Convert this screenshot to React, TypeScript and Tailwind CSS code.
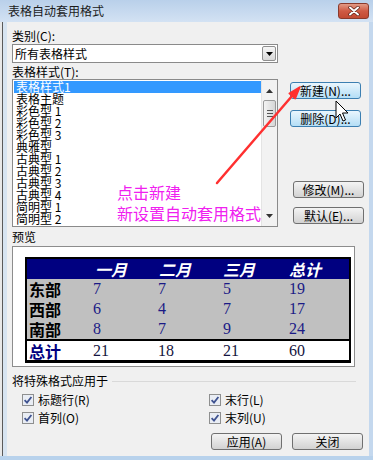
import React from 'react'

const items = [
  '表格样式1', '表格主题', '彩色型 1', '彩色型 2', '彩色型 3', '典雅型',
  '古典型 1', '古典型 2', '古典型 3', '古典型 4', '简明型 1', '简明型 2',
]

const regions = [
  { name: '东部', v: [7, 7, 5, 19] },
  { name: '西部', v: [6, 4, 7, 17] },
  { name: '南部', v: [8, 7, 9, 24] },
]

const cols = 'grid grid-cols-[66px_65px_65px_66px_1fr]'

function Btn({ label, hot, className = '' }: { label: string; hot?: boolean; className?: string }) {
  return (
    <div
      className={`h-[17px] w-[71px] rounded-[3px] border flex items-center justify-center text-[12px] leading-none text-black bg-linear-to-b ${
        hot ? 'border-[#3c7fb1] from-[#eaf6fd] to-[#b4def6]' : 'border-[#707070] from-[#f4f4f4] to-[#d2d2d2]'
      } ${className}`}
    >
      {label}
    </div>
  )
}

function Check({ label }: { label: string }) {
  return (
    <div className="flex items-center gap-[4px]">
      <svg width="12" height="12" viewBox="0 0 12 12">
        <rect x="0.5" y="0.5" width="11" height="11" fill="#e9edf4" stroke="#8e8f8f" />
        <path d="M2.6 6.2 L5 8.6 L9.4 3" stroke="#3e5290" strokeWidth="1.8" fill="none" />
      </svg>
      <span className="text-[12px] leading-none">{label}</span>
    </div>
  )
}

export default function App() {
  return (
    <div className="relative w-[373px] h-[460px] overflow-hidden flex flex-col bg-[#c4d8ee] font-['Noto_Sans_CJK_SC',sans-serif] text-black">
      {/* title bar */}
      <div className="h-[22px] flex items-start justify-between pl-[8px] pr-[4px] pt-[3px] bg-linear-to-b from-[#b9d0ea] to-[#d3e2f3]">
        <span className="text-[12px] leading-[16px] text-[#1b1b1b]">表格自动套用格式</span>
        <div className="w-[31px] h-[16px] rounded-[3px] border border-[#8a3a2c] bg-linear-to-b from-[#e29a86] via-[#cf5a44] to-[#c24a33] flex items-center justify-center">
          <svg width="12" height="10" viewBox="0 0 12 10">
            <path d="M2 1.5 L10 8.5 M10 1.5 L2 8.5" stroke="#5a1f17" strokeWidth="3.4" strokeLinecap="round" />
            <path d="M2 1.5 L10 8.5 M10 1.5 L2 8.5" stroke="#ffffff" strokeWidth="2" strokeLinecap="round" />
          </svg>
        </div>
      </div>

      <div className="flex flex-1">
        {/* left edge */}
        <div className="w-[7px] flex">
          <div className="w-[2px] bg-[#e8e8e8]" />
          <div className="w-[1px] bg-[#5a5a5a]" />
          <div className="flex-1 bg-[#d7e4f1]" />
        </div>

        {/* dialog body */}
        <div className="flex-1 bg-[#f0f0f0] flex flex-col pl-[5px]">
          <div className="mt-[8px] text-[12px] leading-[12px]">类别(C):</div>
          <div className="mt-[2px] w-[266px] h-[19px] bg-white border border-[#8a8a8a] flex items-center justify-between pl-[2px] pr-[1px]">
            <span className="text-[12px] leading-none">所有表格样式</span>
            <div className="w-[14px] h-[15px] border border-[#8f8f8f] rounded-[2px] bg-linear-to-b from-[#f6f6f6] to-[#d8d8d8] flex items-center justify-center">
              <svg width="7" height="4" viewBox="0 0 7 4">
                <path d="M0 0 L7 0 L3.5 4 Z" fill="#000" />
              </svg>
            </div>
          </div>
          <div className="mt-[3px] text-[12px] leading-[12px]">表格样式(T):</div>

          <div className="mt-[1px] flex items-start gap-[12px]">
            {/* list box */}
            <div className="w-[266px] h-[148px] bg-white border border-[#8a8a8a] flex">
              <div className="flex-1 pt-[1px] pl-[1px]">
                {items.map((it, i) => (
                  <div
                    key={it}
                    className={`h-[12px] text-[12px] leading-[12px] pl-[2px] ${i === 0 ? 'bg-[#3399ff] text-white' : 'text-black'}`}
                  >
                    {it}
                  </div>
                ))}
              </div>
              <div className="w-[16px] bg-[#f2f2f2] border-l border-[#e4e4e4] flex flex-col items-center">
                <svg className="mt-[9px]" width="7" height="4" viewBox="0 0 7 4">
                  <path d="M0 4 L7 4 L3.5 0 Z" fill="#333" />
                </svg>
                <div className="mt-[7px] w-[13px] h-[27px] rounded-[2px] border border-[#9a9a9a] bg-linear-to-r from-[#f3f3f3] to-[#d6d6d6] flex flex-col items-center justify-center gap-[2px]">
                  <div className="w-[6px] h-[1px] bg-[#555]" />
                  <div className="w-[6px] h-[1px] bg-[#555]" />
                  <div className="w-[6px] h-[1px] bg-[#555]" />
                </div>
                <svg className="mt-auto mb-[8px]" width="7" height="4" viewBox="0 0 7 4">
                  <path d="M0 0 L7 0 L3.5 4 Z" fill="#333" />
                </svg>
              </div>
            </div>

            {/* side buttons */}
            <div className="flex flex-col pt-[3px]">
              <Btn label="新建(N)..." hot />
              <Btn label="删除(D)..." hot className="mt-[11px]" />
              <Btn label="修改(M)..." className="mt-[54px] ml-[3px]" />
              <Btn label="默认(E)..." className="mt-[9px] ml-[3px]" />
            </div>
          </div>

          <div className="mt-[4px] text-[12px] leading-[12px]">预览</div>
          <div className="mt-[3px] w-[343px] h-[121px] bg-white border border-[#8d8d8d] pt-[10px] pl-[12px]">
            <div className="w-[326px] border-t-2 border-x-2 border-b-[3px] border-black">
              <div className={`${cols} h-[20px] bg-[#000080] items-center text-white font-bold italic text-[16px] leading-none`}>
                <span />
                <span className="pl-[2px]">一月</span>
                <span className="pl-[1px]">二月</span>
                <span>三月</span>
                <span>总计</span>
              </div>
              <div className="bg-[#c0c0c0] border-b-2 border-black">
                {regions.map((r) => (
                  <div key={r.name} className={`${cols} h-[20px] items-center`}>
                    <span className="pl-[2px] font-bold text-[16px] leading-none">{r.name}</span>
                    {r.v.map((n, i) => (
                      <span key={i} className="font-['Liberation_Serif',serif] text-[16px] leading-none text-[#1a1a86]">
                        {n}
                      </span>
                    ))}
                  </div>
                ))}
              </div>
              <div className={`${cols} h-[19px] items-center`}>
                <span className="pl-[2px] font-bold text-[16px] leading-none text-[#000080]">总计</span>
                {[21, 18, 21, 60].map((n, i) => (
                  <span key={i} className="font-['Liberation_Serif',serif] text-[16px] leading-none text-[#151540]">
                    {n}
                  </span>
                ))}
              </div>
            </div>
          </div>

          <div className="mt-[8px] flex items-center gap-[4px] pr-[13px]">
            <span className="text-[12px] leading-[12px]">将特殊格式应用于</span>
            <div className="flex-1 h-[1px] bg-[#d9d9d9]" />
          </div>
          <div className="mt-[7px] flex pl-[10px]">
            <div className="w-[187px]"><Check label="标题行(R)" /></div>
            <Check label="末行(L)" />
          </div>
          <div className="mt-[6px] flex pl-[10px]">
            <div className="w-[187px]"><Check label="首列(O)" /></div>
            <Check label="末列(U)" />
          </div>
          <div className="mt-[9px] flex justify-end gap-[10px] pr-[6px]">
            <Btn label="应用(A)" />
            <Btn label="关闭" className="w-[70px]" />
          </div>
        </div>

        {/* right edge */}
        <div className="w-[4px] bg-[#c4d8ee]" />
      </div>
      <div className="h-[4px] bg-[#b8d2ec]" />

      {/* annotation text */}
      <div className="absolute left-[117px] top-[182px] text-[16px] leading-[21px] text-[#f020f0]">
        <div>点击新建</div>
        <div>新设置自动套用格式</div>
      </div>

      {/* annotation arrow + mouse cursor */}
      <svg className="absolute left-0 top-0 pointer-events-none" width="373" height="460" viewBox="0 0 373 460">
        <line x1="217" y1="183" x2="292" y2="96" stroke="#ff3030" strokeWidth="2.5" strokeLinecap="round" />
        <path d="M300 87 L295.2 98.7 L289.2 93.5 Z" fill="#ff3030" stroke="#ff3030" strokeWidth="1.5" strokeLinejoin="round" />
        <path
          d="M336 101 L336 118 L340 114 L343 121 L345.5 120 L342.5 113 L348 113 Z"
          fill="#ffffff"
          stroke="#000000"
          strokeWidth="1"
          strokeLinejoin="round"
        />
      </svg>
    </div>
  )
}
